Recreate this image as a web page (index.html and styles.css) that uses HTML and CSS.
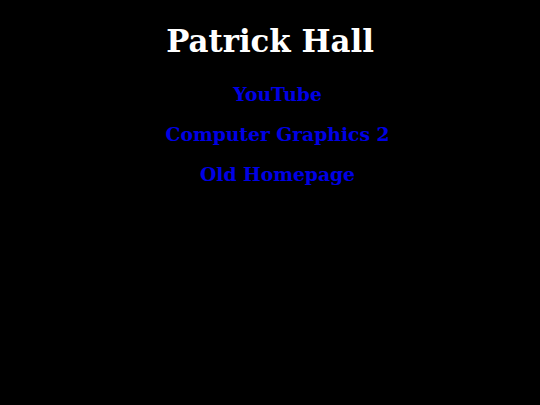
FILE: index.html
```html
<!DOCTYPE html>
<html>
<head>
<meta charset="utf-8">
<title>Patrick Hall</title>
<link rel="stylesheet" href="styles.css">
</head>
<body class="page">
<h1 class="title">Patrick Hall</h1>
<h3 class="item"><a class="link" href="#">YouTube</a></h3>
<h3 class="item"><a class="link" href="#">Computer Graphics 2</a></h3>
<h3 class="item"><a class="link" href="#">Old Homepage</a></h3>
</body>
</html>
```

FILE: styles.css
```css
html { background: #000; }
.page {
  margin: 8px;
  background: #000;
  color: #fff;
  font-family: "DejaVu Serif", "Liberation Serif", serif;
  text-align: center;
}
.title {
  font-size: 30.8px;
  line-height: 37px;
  margin: 15px 0 23px;
  font-weight: bold;
}
.item {
  font-size: 18.72px;
  line-height: 22px;
  margin: 18px 0;
  padding-left: 15px;
  font-weight: bold;
}
.link {
  color: #0000e6;
  text-decoration: none;
}
```
